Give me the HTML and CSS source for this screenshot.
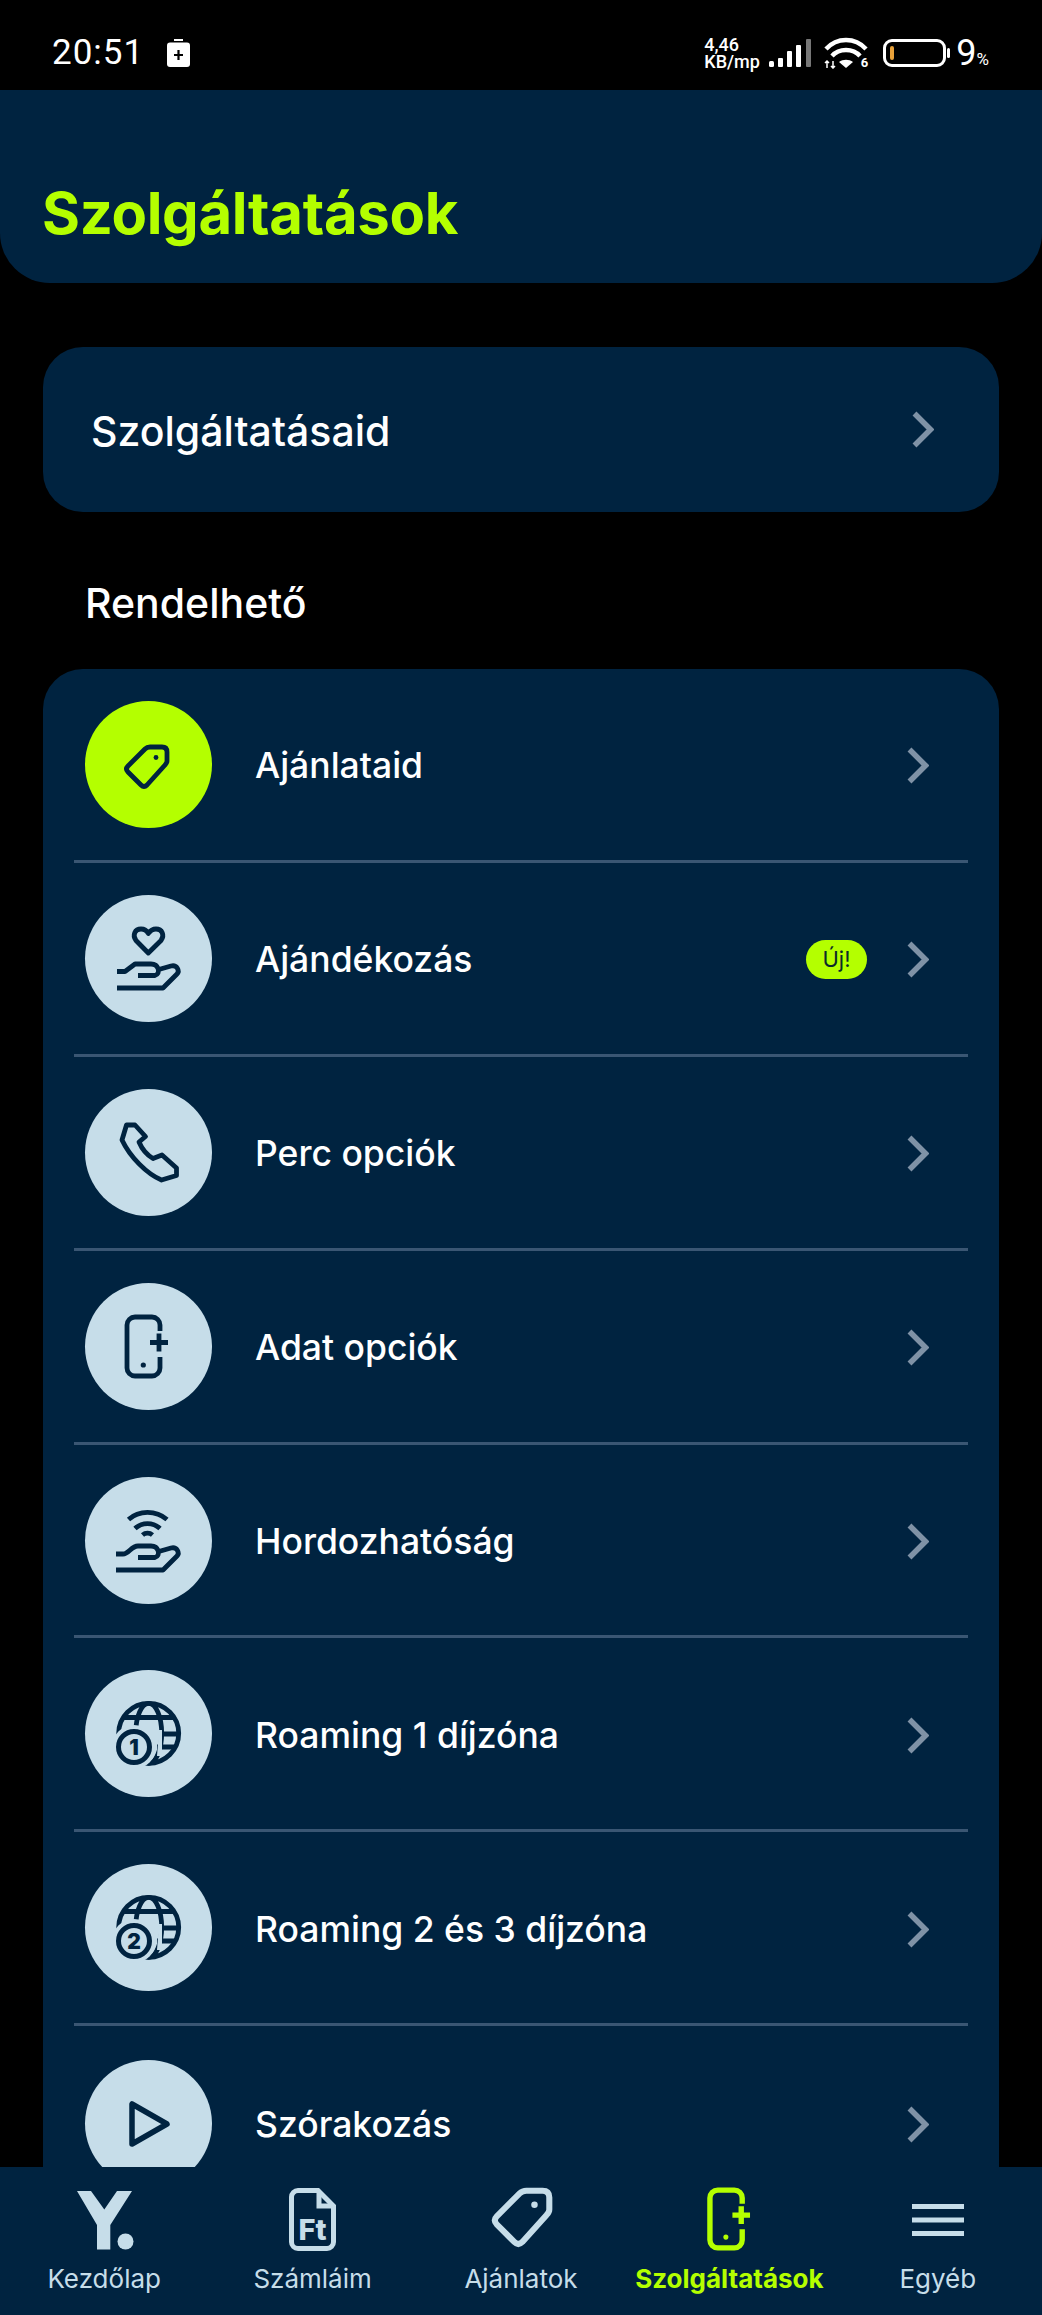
FILE: index.html
```html
<!DOCTYPE html>
<html lang="hu">
<head>
    <meta charset="UTF-8">
    <meta name="viewport" content="width=device-width, initial-scale=1.0">
    <title>Szolgáltatások</title>
    <link rel="stylesheet" href="styles.css">
</head>
<body>
    <div class="screen">
        <div class="statusbar">
            <div class="status-left">
                <span class="clock">20:51</span>
                <svg class="charge" viewBox="0 0 23 28">
                    <rect x="7" y="0" width="9" height="2" fill="#fff"/>
                    <rect x="0" y="3.5" width="23" height="24.5" rx="3" fill="#fff"/>
                    <path d="M11.5 11v10M7 16h9" stroke="#000" stroke-width="2.2"/>
                </svg>
            </div>
            <div class="status-right">
                <div class="netspeed"><span>4,46</span><span>KB/mp</span></div>
                <svg class="signal" viewBox="0 0 43 28">
                    <rect x="0" y="22" width="5" height="6" rx="1.5" fill="#fff"/>
                    <rect x="9" y="19" width="5" height="9" rx="1" fill="#fff"/>
                    <rect x="18" y="12" width="5" height="16" rx="1" fill="#fff"/>
                    <rect x="27" y="6" width="5" height="22" rx="1" fill="#fff"/>
                    <rect x="37" y="0" width="5" height="28" rx="1" fill="#777"/>
                </svg>
                <div class="wifi">
                    <svg viewBox="0 0 44 33">
                        <path d="M2 13C13 1 31 1 42 13M8 20C15 12 29 12 36 20" fill="none" stroke="#fff" stroke-width="4.4"/>
                        <path d="M15 26c4-3 10-3 14 0l-7 6z" fill="#fff"/>
                        <path d="M3 25v7M1 27l2-2 2 2M9 25v7M7 30l2 2 2-2" fill="none" stroke="#fff" stroke-width="1.5"/>
                    </svg>
                    <span class="wifi-six">6</span>
                </div>
                <div class="battery"><span class="battery-level"></span></div>
                <div class="percent">9<small>%</small></div>
            </div>
        </div>

        <div class="page-header">
            <h1>Szolgáltatások</h1>
        </div>

        <div class="content">
            <div class="card card-single">
                <span class="single-label">Szolgáltatásaid</span>
                <svg class="chevron" viewBox="0 0 22 37"><path d="M2.5 2.5L18.500 18.500L2.500 34.500"/></svg>
            </div>

            <div class="section-title">Rendelhető</div>

            <div class="card card-list">
                <div class="row">
                    <div class="round round-active">
                        <svg viewBox="0 0 127 127">
                            <path class="ico" d="M65 46H77Q82 46 82 51V60Q82 62 80 64L62 84Q59 87 56 84L43 71Q40 68 43 65L60 48Q62 46 65 46Z"/>
                            <circle class="ico-dot" cx="71" cy="56.500" r="2.400"/>
                        </svg>
                    </div>
                    <span class="row-label">Ajánlataid</span>
                    <svg class="chevron" viewBox="0 0 22 37"><path d="M2.5 2.5L18.500 18.500L2.500 34.500"/></svg>
                </div>

                <div class="row">
                    <div class="round">
                        <svg viewBox="0 0 127 127">
                            <path class="ico" d="M63.300 58L51 45.500C47 40 50 34 56 34C60 34 62 36 63.300 38.500C65 36 67 34 71 34C77 34 80 40 76 45.500Z"/>
                            <path class="ico-butt" d="M32 76.500H40L50 69H66C74 69 76 79 70 80.500H53M72 75L86 71C92 69.500 95 76 92 79L78 93H32"/>
                        </svg>
                    </div>
                    <span class="row-label">Ajándékozás</span>
                    <span class="badge">Új!</span>
                    <svg class="chevron" viewBox="0 0 22 37"><path d="M2.5 2.5L18.500 18.500L2.500 34.500"/></svg>
                </div>

                <div class="row">
                    <div class="round">
                        <svg viewBox="0 0 127 127">
                            <path class="ico" d="M41.500 36H50L60.500 47.500L54 53C57 60 62 66 68 69.500L77 66L91.500 79V86.500L76.500 91C62 85 45 68 37 51Z"/>
                        </svg>
                    </div>
                    <span class="row-label">Perc opciók</span>
                    <svg class="chevron" viewBox="0 0 22 37"><path d="M2.5 2.5L18.500 18.500L2.500 34.500"/></svg>
                </div>

                <div class="row">
                    <div class="round">
                        <svg viewBox="0 0 127 127">
                            <path class="ico-butt" d="M75 48V42A8 8 0 0 0 67 34H50A8 8 0 0 0 42 42V85A8 8 0 0 0 50 93H67A8 8 0 0 0 75 85V74"/>
                            <path class="ico-butt" d="M65 59.500H83M74 50.500V68.500"/>
                            <circle class="ico-dot" cx="58.300" cy="82" r="2.600"/>
                        </svg>
                    </div>
                    <span class="row-label">Adat opciók</span>
                    <svg class="chevron" viewBox="0 0 22 37"><path d="M2.5 2.5L18.500 18.500L2.500 34.500"/></svg>
                </div>

                <div class="row">
                    <div class="round">
                        <svg viewBox="0 0 127 127">
                            <path class="ico-butt" d="M43.500 42.500C54 33 71 33 82 42.500M50 51.500C57 45 68 45 75 51.500M57.500 58C60.500 55.500 64.500 55.500 67.500 58"/>
                            <path class="ico-butt" d="M31 77H38C44 77 46 69 53 69H66C74 69 76 79 70 80.500H53M72 75L86 71C92 69.500 95 76 92 79L78 93H31"/>
                        </svg>
                    </div>
                    <span class="row-label">Hordozhatóság</span>
                    <svg class="chevron" viewBox="0 0 22 37"><path d="M2.5 2.5L18.500 18.500L2.500 34.500"/></svg>
                </div>

                <div class="row">
                    <div class="round">
                        <svg viewBox="0 0 127 127">
                            <circle class="ico" cx="63.700" cy="63.300" r="30"/>
                            <ellipse class="ico" cx="63.700" cy="63.300" rx="13" ry="30"/>
                            <path class="ico-butt" d="M38 47.500H89M76 64H93M72 77H90"/>
                            <circle class="coin-gap" cx="49" cy="77" r="22"/>
                            <path class="coin-gap" d="M74 60h3v26h-5z"/>
                            <circle class="coin" cx="49" cy="77" r="15.500"/>
                            <text class="coin-num" x="49" y="84.500">1</text>
                        </svg>
                    </div>
                    <span class="row-label">Roaming 1 díjzóna</span>
                    <svg class="chevron" viewBox="0 0 22 37"><path d="M2.5 2.5L18.500 18.500L2.500 34.500"/></svg>
                </div>

                <div class="row">
                    <div class="round">
                        <svg viewBox="0 0 127 127">
                            <circle class="ico" cx="63.700" cy="63.300" r="30"/>
                            <ellipse class="ico" cx="63.700" cy="63.300" rx="13" ry="30"/>
                            <path class="ico-butt" d="M38 47.500H89M76 64H93M72 77H90"/>
                            <circle class="coin-gap" cx="49" cy="77" r="22"/>
                            <path class="coin-gap" d="M74 60h3v26h-5z"/>
                            <circle class="coin" cx="49" cy="77" r="15.500"/>
                            <text class="coin-num" x="49" y="84.500">2</text>
                        </svg>
                    </div>
                    <span class="row-label">Roaming 2 és 3 díjzóna</span>
                    <svg class="chevron" viewBox="0 0 22 37"><path d="M2.5 2.5L18.500 18.500L2.500 34.500"/></svg>
                </div>

                <div class="row">
                    <div class="round">
                        <svg viewBox="0 0 127 127">
                            <path class="ico-play" d="M47 44V84L82 64Z"/>
                        </svg>
                    </div>
                    <span class="row-label">Szórakozás</span>
                    <svg class="chevron" viewBox="0 0 22 37"><path d="M2.5 2.5L18.500 18.500L2.500 34.500"/></svg>
                </div>
            </div>
        </div>

        <div class="bottom-nav">
            <div class="nav-item">
                <svg class="nav-logo" viewBox="0 0 57 59">
                    <path d="M0 0H14L27.300 18.500L40 0H55L33.300 34V58.500H20V34Z"/>
                    <circle cx="48.500" cy="50.500" r="8"/>
                </svg>
                <span>Kezdőlap</span>
            </div>
            <div class="nav-item">
                <svg class="nav-doc" viewBox="0 0 47 63">
                    <path class="nav-stroke" d="M9 2.500H29L44.500 18V54A6.500 6.500 0 0 1 38 60.500H9A6.500 6.500 0 0 1 2.500 54V9A6.500 6.500 0 0 1 9 2.500Z"/>
                    <path class="nav-stroke" d="M30 3V18H44"/>
                    <text class="doc-text" x="23.500" y="52">Ft</text>
                </svg>
                <span>Számláim</span>
            </div>
            <div class="nav-item">
                <svg class="nav-tag" viewBox="38 44 46 46">
                    <path class="nav-stroke-thin" d="M65 46H77Q82 46 82 51V60Q82 62 80 64L62 84Q59 87 56 84L43 71Q40 68 43 65L60 48Q62 46 65 46Z"/>
                    <circle class="nav-dot" cx="71" cy="56.500" r="2.400"/>
                </svg>
                <span>Ajánlatok</span>
            </div>
            <div class="nav-item nav-active">
                <svg class="nav-phone" viewBox="39 31 45 66">
                    <path class="nav-stroke-thin" d="M75 48V42A8 8 0 0 0 67 34H50A8 8 0 0 0 42 42V85A8 8 0 0 0 50 93H67A8 8 0 0 0 75 85V74"/>
                    <path class="nav-stroke-thin" d="M65 59.500H83M74 50.500V68.500"/>
                    <circle class="nav-dot" cx="58.300" cy="82" r="2.600"/>
                </svg>
                <span>Szolgáltatások</span>
            </div>
            <div class="nav-item">
                <svg class="nav-menu" viewBox="0 0 52 32">
                    <path d="M0 2.500H52M0 16H52M0 29.500H52"/>
                </svg>
                <span>Egyéb</span>
            </div>
        </div>
    </div>
</body>
</html>
```

FILE: styles.css
```css
* {
    box-sizing: border-box;
}
body {
    margin: 0;
    background: #000;
    font-family: Inter, Lato, sans-serif;
    font-weight: 500;
    color: #fff;
}
.screen {
    display: flex;
    flex-direction: column;
    height: 2315px;
    overflow: hidden;
}

/* status bar */
.statusbar {
    display: flex;
    justify-content: space-between;
    align-items: center;
    height: 90px;
    flex-shrink: 0;
    padding: 15px 53px 0 52px;
    font-family: Roboto, sans-serif;
    font-weight: 400;
}
.status-left {
    display: flex;
    align-items: center;
    gap: 23px;
}
.clock {
    font-size: 35px;
    letter-spacing: 1px;
}
.charge {
    width: 23px;
    height: 28px;
}
.status-right {
    display: flex;
    align-items: center;
}
.netspeed {
    display: flex;
    flex-direction: column;
    font-size: 18px;
    font-weight: 500;
    line-height: 17px;
    width: 65px;
}
.signal {
    width: 43px;
    height: 28px;
    margin-right: 12px;
}
.wifi {
    position: relative;
    width: 44px;
    height: 33px;
    margin-right: 15px;
}
.wifi svg {
    display: block;
    width: 44px;
    height: 33px;
}
.wifi-six {
    position: absolute;
    right: 0;
    bottom: 0;
    font-size: 13px;
    font-weight: 700;
    line-height: 13px;
}
.battery {
    position: relative;
    width: 63px;
    height: 28px;
    border: 3px solid #fff;
    border-radius: 9px;
    margin-right: 10px;
    padding: 4px;
}
.battery::after {
    content: "";
    position: absolute;
    right: -7px;
    top: 6px;
    width: 3px;
    height: 10px;
    border-radius: 2px;
    background: #fff;
}
.battery-level {
    display: block;
    width: 4px;
    height: 100%;
    border-radius: 2px;
    background: #e9a23a;
}
.percent {
    font-size: 36px;
    line-height: 1;
}
.percent small {
    font-size: 17px;
}

/* header */
.page-header {
    display: flex;
    align-items: flex-end;
    height: 193px;
    flex-shrink: 0;
    padding: 0 42px 34px;
    background: #002340;
    border-radius: 0 0 50px 50px;
}
h1 {
    margin: 0;
    font-size: 58px;
    font-weight: 700;
    line-height: 72px;
    letter-spacing: -0.3px;
    color: #b4ff00;
}

/* content */
.content {
    flex: 1;
    min-height: 0;
    overflow: hidden;
    padding: 64px 43px 0;
}
.card {
    background: #002340;
    border-radius: 40px;
}
.card-single {
    display: flex;
    align-items: center;
    justify-content: space-between;
    height: 165px;
    padding: 0 65px 0 48px;
}
.single-label {
    padding-top: 2px;
    font-size: 41px;
}
.section-title {
    display: flex;
    align-items: center;
    height: 157px;
    padding: 25px 0 0 42px;
    font-size: 41px;
}
.card-list {
    padding: 0 31px;
}
.row {
    display: flex;
    align-items: center;
    height: 193.9px;
    padding: 0 39px 0 11px;
    border-bottom: 3px solid #3a5673;
}
.row:last-child {
    border-bottom: none;
}
.round {
    width: 127px;
    height: 127px;
    flex-shrink: 0;
    margin-right: 43px;
    border-radius: 50%;
    background: #c6dde9;
}
.round svg {
    display: block;
    width: 127px;
    height: 127px;
}
.round-active {
    background: #b4ff00;
}
.row-label {
    flex: 1;
    padding-top: 3px;
    font-size: 35.5px;
}
.badge {
    display: flex;
    align-items: center;
    justify-content: center;
    width: 61px;
    height: 39px;
    margin: 2px 40px 0 0;
    border-radius: 20px;
    background: #b4ff00;
    color: #0b2a2a;
    font-size: 22px;
    font-weight: 400;
}
.chevron {
    width: 22px;
    height: 37px;
    flex-shrink: 0;
    fill: none;
    stroke: #7f92a6;
    stroke-width: 5.5;
}
.row .chevron {
    margin-top: 3px;
}

/* circle icons */
.ico, .ico-butt, .ico-play {
    fill: none;
    stroke: #002340;
    stroke-width: 4.8;
    stroke-linejoin: round;
}
.ico-play {
    stroke-width: 5.5;
}
.ico-dot {
    fill: #002340;
}
.coin-gap {
    fill: #c6dde9;
}
.coin {
    fill: #c6dde9;
    stroke: #002340;
    stroke-width: 5;
}
.coin-num {
    font-family: Inter, sans-serif;
    font-size: 21px;
    font-weight: 900;
    text-anchor: middle;
    fill: #002340;
}

/* bottom nav */
.bottom-nav {
    display: grid;
    grid-template-columns: repeat(5, 1fr);
    height: 148px;
    flex-shrink: 0;
    background: #002340;
}
.nav-item {
    position: relative;
    display: flex;
    flex-direction: column;
    align-items: center;
    justify-content: flex-end;
    padding-bottom: 19px;
    font-size: 26px;
    line-height: 34px;
    font-weight: 400;
    color: #c6dde9;
}
.nav-item svg {
    position: absolute;
    overflow: visible;
}
.nav-logo {
    top: 24px;
    width: 57px;
    height: 59px;
    margin-left: 2px;
    fill: #c6dde9;
}
.nav-doc {
    top: 21px;
    width: 47px;
    height: 63px;
}
.nav-stroke, .nav-stroke-thin {
    fill: none;
    stroke: currentColor;
    stroke-width: 5;
}
.nav-stroke-thin {
    stroke-width: 4.5;
    stroke-linejoin: round;
}
.doc-text {
    font-family: Inter, sans-serif;
    font-size: 29px;
    font-weight: 800;
    text-anchor: middle;
    fill: currentColor;
}
.nav-tag {
    top: 21px;
    width: 62px;
    height: 62px;
}
.nav-dot {
    fill: currentColor;
}
.nav-phone {
    top: 20px;
    width: 44px;
    height: 65px;
}
.nav-phone .nav-stroke-thin {
    stroke-width: 5.5;
}
.nav-menu {
    top: 37px;
    width: 52px;
    height: 32px;
    fill: none;
    stroke: currentColor;
    stroke-width: 5;
}
.nav-active {
    color: #b4ff00;
    font-weight: 700;
}
```
